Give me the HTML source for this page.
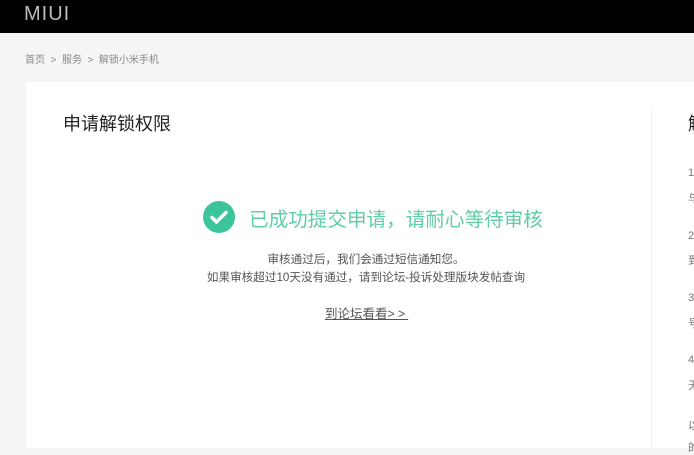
<!DOCTYPE html>
<html><head><meta charset="utf-8"><style>
*{margin:0;padding:0;box-sizing:border-box}
body{width:694px;height:448px;overflow:hidden;background:#f5f5f5;font-family:"Liberation Sans","Noto Sans CJK SC",sans-serif;position:relative}
.top{position:absolute;left:0;top:0;width:694px;height:33px;background:#000}
.logo{position:absolute;left:24px;top:3px;color:#bbb;font-size:20px;letter-spacing:1px;font-weight:300}
.bc{position:absolute;left:25px;top:51px;font-size:10px;color:#888}
.card{position:absolute;left:26px;top:82px;width:668px;height:366px;background:#fff}
.div{position:absolute;left:651px;top:107px;width:1px;height:341px;background:#eee}
.t{position:absolute;left:63px;top:110px;font-size:18px;color:#222}
.ok{position:absolute;left:203px;top:201px;width:32px;height:32px;border-radius:50%;background:#3cc59a}
.msg{position:absolute;left:249px;top:203px;font-size:19.6px;color:#5fcda6;white-space:nowrap}
.p{position:absolute;left:0;width:732px;text-align:center;font-size:11.6px;color:#555;white-space:nowrap}
.lk{position:absolute;left:325px;top:303px;font-size:12.5px;color:#555;text-decoration:underline}
.r{position:absolute;left:688px;font-size:11px;color:#777}
</style></head><body>
<div class="top"><div class="logo">MIUI</div></div>
<div class="bc">首页 &nbsp;&gt;&nbsp; 服务 &nbsp;&gt;&nbsp; 解锁小米手机</div>
<div class="card"></div>
<div class="div"></div>
<div class="t">申请解锁权限</div>
<div class="ok"><svg width="32" height="32" viewBox="0 0 32 32"><path d="M9 16.5l4.5 4.5 9.5-9.5" fill="none" stroke="#fff" stroke-width="3.5" stroke-linecap="round" stroke-linejoin="round"/></svg></div>
<div class="msg">已成功提交申请，请耐心等待审核</div>
<div class="p" style="top:251px">审核通过后，我们会通过短信通知您。</div>
<div class="p" style="top:269px">如果审核超过10天没有通过，请到论坛-投诉处理版块发帖查询</div>
<div class="lk">到论坛看看<span style="letter-spacing:3px">&gt;&gt;</span></div>
<div class="r" style="top:110px;font-size:18px;color:#222">解</div>
<div class="r" style="top:167px">1</div>
<div class="r" style="top:190px">与</div>
<div class="r" style="top:230px">2</div>
<div class="r" style="top:252px">到</div>
<div class="r" style="top:292px">3</div>
<div class="r" style="top:315px">号</div>
<div class="r" style="top:354px">4</div>
<div class="r" style="top:377px">无</div>
<div class="r" style="top:417px">以</div>
<div class="r" style="top:439px">的</div>
</body></html>
